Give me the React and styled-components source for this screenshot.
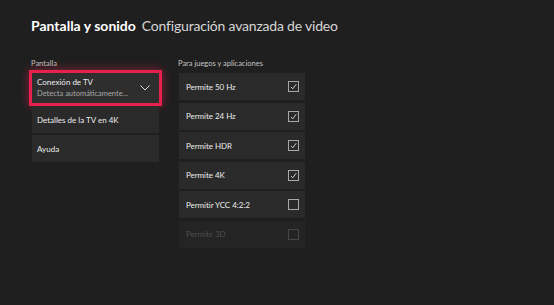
import React from "react";
import styled, { createGlobalStyle } from "styled-components";

const GlobalStyle = createGlobalStyle`
    html, body {
        margin: 0;
        padding: 0;
        background: #1f1f1f;
    }
    body {
        font-family: Lato, "Open Sans", sans-serif;
        color: #fff;
        width: 554px;
        height: 305px;
        overflow: hidden;
    }
`;

const Page = styled.div`
    padding: 16px 0 0 31px;
`;

const Header = styled.h1`
    margin: 0;
    font-size: 14px;
    line-height: 20px;
    font-weight: 400;
    color: #d6d6d6;
    letter-spacing: -0.2px;
    span {
        color: #fff;
        font-weight: 700;
        letter-spacing: 0;
        margin-right: 6px;
    }
`;

const Columns = styled.div`
    display: flex;
    gap: 19px;
    margin-top: 23px;
`;

const Column = styled.div`
    width: ${(p) => p.width}px;
    display: flex;
    flex-direction: column;
`;

const ColumnLabel = styled.div`
    font-size: 7.5px;
    line-height: 10px;
    color: #c4c4c4;
    margin-bottom: 4px;
`;

const List = styled.div`
    display: flex;
    flex-direction: column;
    gap: ${(p) => p.gap}px;
    padding-left: ${(p) => p.inset || 0}px;
`;

const MenuItem = styled.div`
    height: ${(p) => (p.focused ? 30 : 27)}px;
    background: ${(p) => (p.focused ? "#2e2e2e" : "#2a2a2a")};
    display: flex;
    align-items: center;
    justify-content: space-between;
    padding: 0 9px 0 5px;
    box-sizing: border-box;
    font-size: 8px;
    color: #ececec;
    outline: ${(p) => (p.focused ? "3px solid #e8204d" : "none")};
    box-shadow: ${(p) =>
        p.focused ? "0 0 9px 3px rgba(232, 32, 77, 0.55)" : "none"};
    margin-bottom: ${(p) => (p.focused ? 1 : 0)}px;
`;

const ItemText = styled.div`
    display: flex;
    flex-direction: column;
    line-height: 11px;
    small {
        font-size: 7.5px;
        color: #a8a8a8;
    }
`;

const SettingRow = styled.div`
    height: 27px;
    display: flex;
    align-items: center;
    justify-content: space-between;
    padding: 0 6px 0 7px;
    box-sizing: border-box;
    font-size: 8px;
    letter-spacing: -0.05px;
    color: ${(p) => (p.disabled ? "#4e4e4e" : "#ececec")};
    background: ${(p) => (p.disabled ? "#242424" : "#2a2a2a")};
`;

const CheckBox = styled.div`
    width: 11px;
    height: 11px;
    box-sizing: border-box;
    border: 1.5px solid ${(p) => (p.disabled ? "#464646" : "#a8a8a8")};
    display: flex;
    align-items: center;
    justify-content: center;
`;

const Chevron = () => (
    <svg width="10" height="6" viewBox="0 0 10 6" fill="none">
        <path d="M0.5 0.5 L5 5 L9.5 0.5" stroke="#d8d8d8" strokeWidth="1" />
    </svg>
);

const Check = () => (
    <svg width="7" height="7" viewBox="0 0 7 7" fill="none">
        <path d="M1 4 L2.8 5.8 L6.2 1.2" stroke="#dcdcdc" strokeWidth="0.9" />
    </svg>
);

const settings = [
    { label: "Permite 50 Hz", checked: true },
    { label: "Permite 24 Hz", checked: true },
    { label: "Permite HDR", checked: true },
    { label: "Permite 4K", checked: true },
    { label: "Permitir YCC 4:2:2", checked: false },
    { label: "Permite 3D", checked: false, disabled: true },
];

const App = () => {
    return (
        <Page>
            <GlobalStyle />
            <Header>
                <span>Pantalla y sonido</span>Configuración avanzada de video
            </Header>
            <Columns>
                <Column width={128}>
                    <ColumnLabel>Pantalla</ColumnLabel>
                    <List gap={2} inset={1}>
                        <MenuItem focused>
                            <ItemText>
                                Conexión de TV
                                <small>Detecta automáticamente...</small>
                            </ItemText>
                            <Chevron />
                        </MenuItem>
                        <MenuItem>Detalles de la TV en 4K</MenuItem>
                        <MenuItem>Ayuda</MenuItem>
                    </List>
                </Column>
                <Column width={127}>
                    <ColumnLabel>Para juegos y aplicaciones</ColumnLabel>
                    <List gap={2.5} inset={1}>
                        {settings.map((s) => (
                            <SettingRow key={s.label} disabled={s.disabled}>
                                {s.label}
                                <CheckBox disabled={s.disabled}>
                                    {s.checked && <Check />}
                                </CheckBox>
                            </SettingRow>
                        ))}
                    </List>
                </Column>
            </Columns>
        </Page>
    );
};

export default App;
